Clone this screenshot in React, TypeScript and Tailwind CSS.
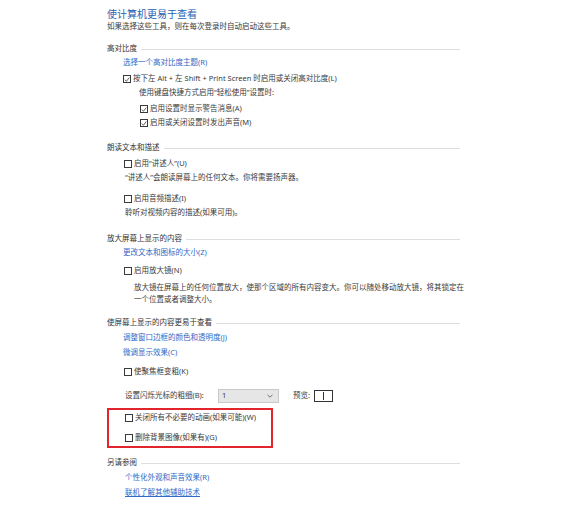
const font = {
  fontFamily: '"Noto Sans", "Noto Sans CJK SC", sans-serif',
};

function Check({ checked }: { checked?: boolean }) {
  return (
    <span className="flex h-[8px] w-[8px] shrink-0 items-center justify-center border border-[#3a3a3a] bg-white">
      {checked && (
        <svg width="7" height="7" viewBox="0 0 7 7" fill="none">
          <path d="M1 3.6 L2.8 5.6 L6.2 1.2" stroke="#333" strokeWidth="0.9" />
        </svg>
      )}
    </span>
  );
}

function CheckRow({
  label,
  checked,
  className = "",
}: {
  label: string;
  checked?: boolean;
  className?: string;
}) {
  return (
    <div className={`flex h-[14px] items-center gap-[2px] ${className}`}>
      <Check checked={checked} />
      <span className="whitespace-nowrap">{label}</span>
    </div>
  );
}

function Header({ title, className = "" }: { title: string; className?: string }) {
  return (
    <div className={`flex h-[14px] items-center gap-[4px] text-[#333] ${className}`}>
      <span className="whitespace-nowrap">{title}</span>
      <div className="h-px flex-1 bg-[#dedede]" />
    </div>
  );
}

function LinkRow({
  label,
  underline,
  className = "",
}: {
  label: string;
  underline?: boolean;
  className?: string;
}) {
  return (
    <div className={`ml-[16px] flex h-[14px] items-center text-[#3169c6] ${className}`}>
      <span className={`whitespace-nowrap ${underline ? "underline" : ""}`}>{label}</span>
    </div>
  );
}

function TextRow({ text, className = "" }: { text: string; className?: string }) {
  return (
    <div className={`flex h-[14px] items-center whitespace-nowrap ${className}`}>{text}</div>
  );
}

export default function App() {
  return (
    <div className="h-[505px] w-[580px] overflow-hidden bg-white" style={font}>
      <div className="ml-[107px] w-[353px] pt-[7px] text-[7.5px] leading-none text-[#3a3a3a]">
        <div className="flex h-[13px] items-center whitespace-nowrap text-[10px] text-[#2a5db3]">
          使计算机更易于查看
        </div>
        <TextRow text="如果选择这些工具，则在每次登录时自动启动这些工具。" className="h-[10px]" />

        <Header title="高对比度" className="mt-[8px]" />
        <LinkRow label="选择一个高对比度主题(R)" />
        <CheckRow
          checked
          label="按下左 Alt + 左 Shift + Print Screen 时启用或关闭高对比度(L)"
          className="ml-[16px] mt-[2px]"
        />
        <TextRow text="使用键盘快捷方式启用“轻松使用”设置时:" className="ml-[32px]" />
        <CheckRow checked label="启用设置时显示警告消息(A)" className="ml-[33px] mt-[2px]" />
        <CheckRow checked label="启用或关闭设置时发出声音(M)" className="ml-[33px]" />

        <Header title="朗读文本和描述" className="mt-[11px]" />
        <CheckRow label="启用“讲述人”(U)" className="ml-[17px] mt-[2px]" />
        <TextRow text="“讲述人”会朗读屏幕上的任何文本。你将需要扬声器。" className="ml-[18px]" />
        <CheckRow label="启用音频描述(I)" className="ml-[17px] mt-[7px]" />
        <TextRow text="聆听对视频内容的描述(如果可用)。" className="ml-[18px]" />

        <Header title="放大屏幕上显示的内容" className="mt-[12px]" />
        <LinkRow label="更改文本和图标的大小(Z)" />
        <CheckRow label="启用放大镜(N)" className="ml-[17px] mt-[4px]" />
        <div className="ml-[27px] mt-[3px] whitespace-nowrap leading-[12px]">
          放大镜在屏幕上的任何位置放大，使那个区域的所有内容变大。你可以随处移动放大镜，将其锁定在
          <br />
          一个位置或者调整大小。
        </div>

        <Header title="使屏幕上显示的内容更易于查看" className="mt-[11px]" />
        <LinkRow label="调整窗口边框的颜色和透明度(J)" className="mt-[1px]" />
        <LinkRow label="微调显示效果(C)" className="mt-[1px]" />
        <CheckRow label="使聚焦框变粗(K)" className="ml-[17px] mt-[5px]" />
        <div className="ml-[18px] mt-[10px] flex h-[14px] items-center">
          <span className="w-[93px] whitespace-nowrap">设置闪烁光标的粗细(B):</span>
          <div className="flex h-[14px] w-[61px] items-center justify-between border border-[#c9c9c9] bg-[#e6e6e6] pl-[3px] pr-[5px]">
            <span>1</span>
            <svg width="6" height="4" viewBox="0 0 6 4" fill="none">
              <path d="M0.5 0.8 L3 3.2 L5.5 0.8" stroke="#555" strokeWidth="0.8" />
            </svg>
          </div>
          <span className="ml-[14px] whitespace-nowrap">预览:</span>
          <div className="ml-[4px] flex h-[12px] w-[19px] items-center justify-center border border-[#333] bg-white">
            <div className="h-[8px] w-px bg-[#333]" />
          </div>
        </div>

        <div className="mt-[5px] w-[166px] border-2 border-[#e2242c] pb-[1px] pl-[16px] pt-[1px]">
          <CheckRow label="关闭所有不必要的动画(如果可能)(W)" />
          <CheckRow label="删除背景图像(如果有)(G)" className="mt-[6px]" />
        </div>

        <Header title="另请参阅" className="mt-[8px]" />
        <LinkRow label="个性化外观和声音效果(R)" className="ml-[18px] mt-[1px]" />
        <LinkRow label="联机了解其他辅助技术" underline className="ml-[18px] mt-[1px]" />
      </div>
    </div>
  );
}
